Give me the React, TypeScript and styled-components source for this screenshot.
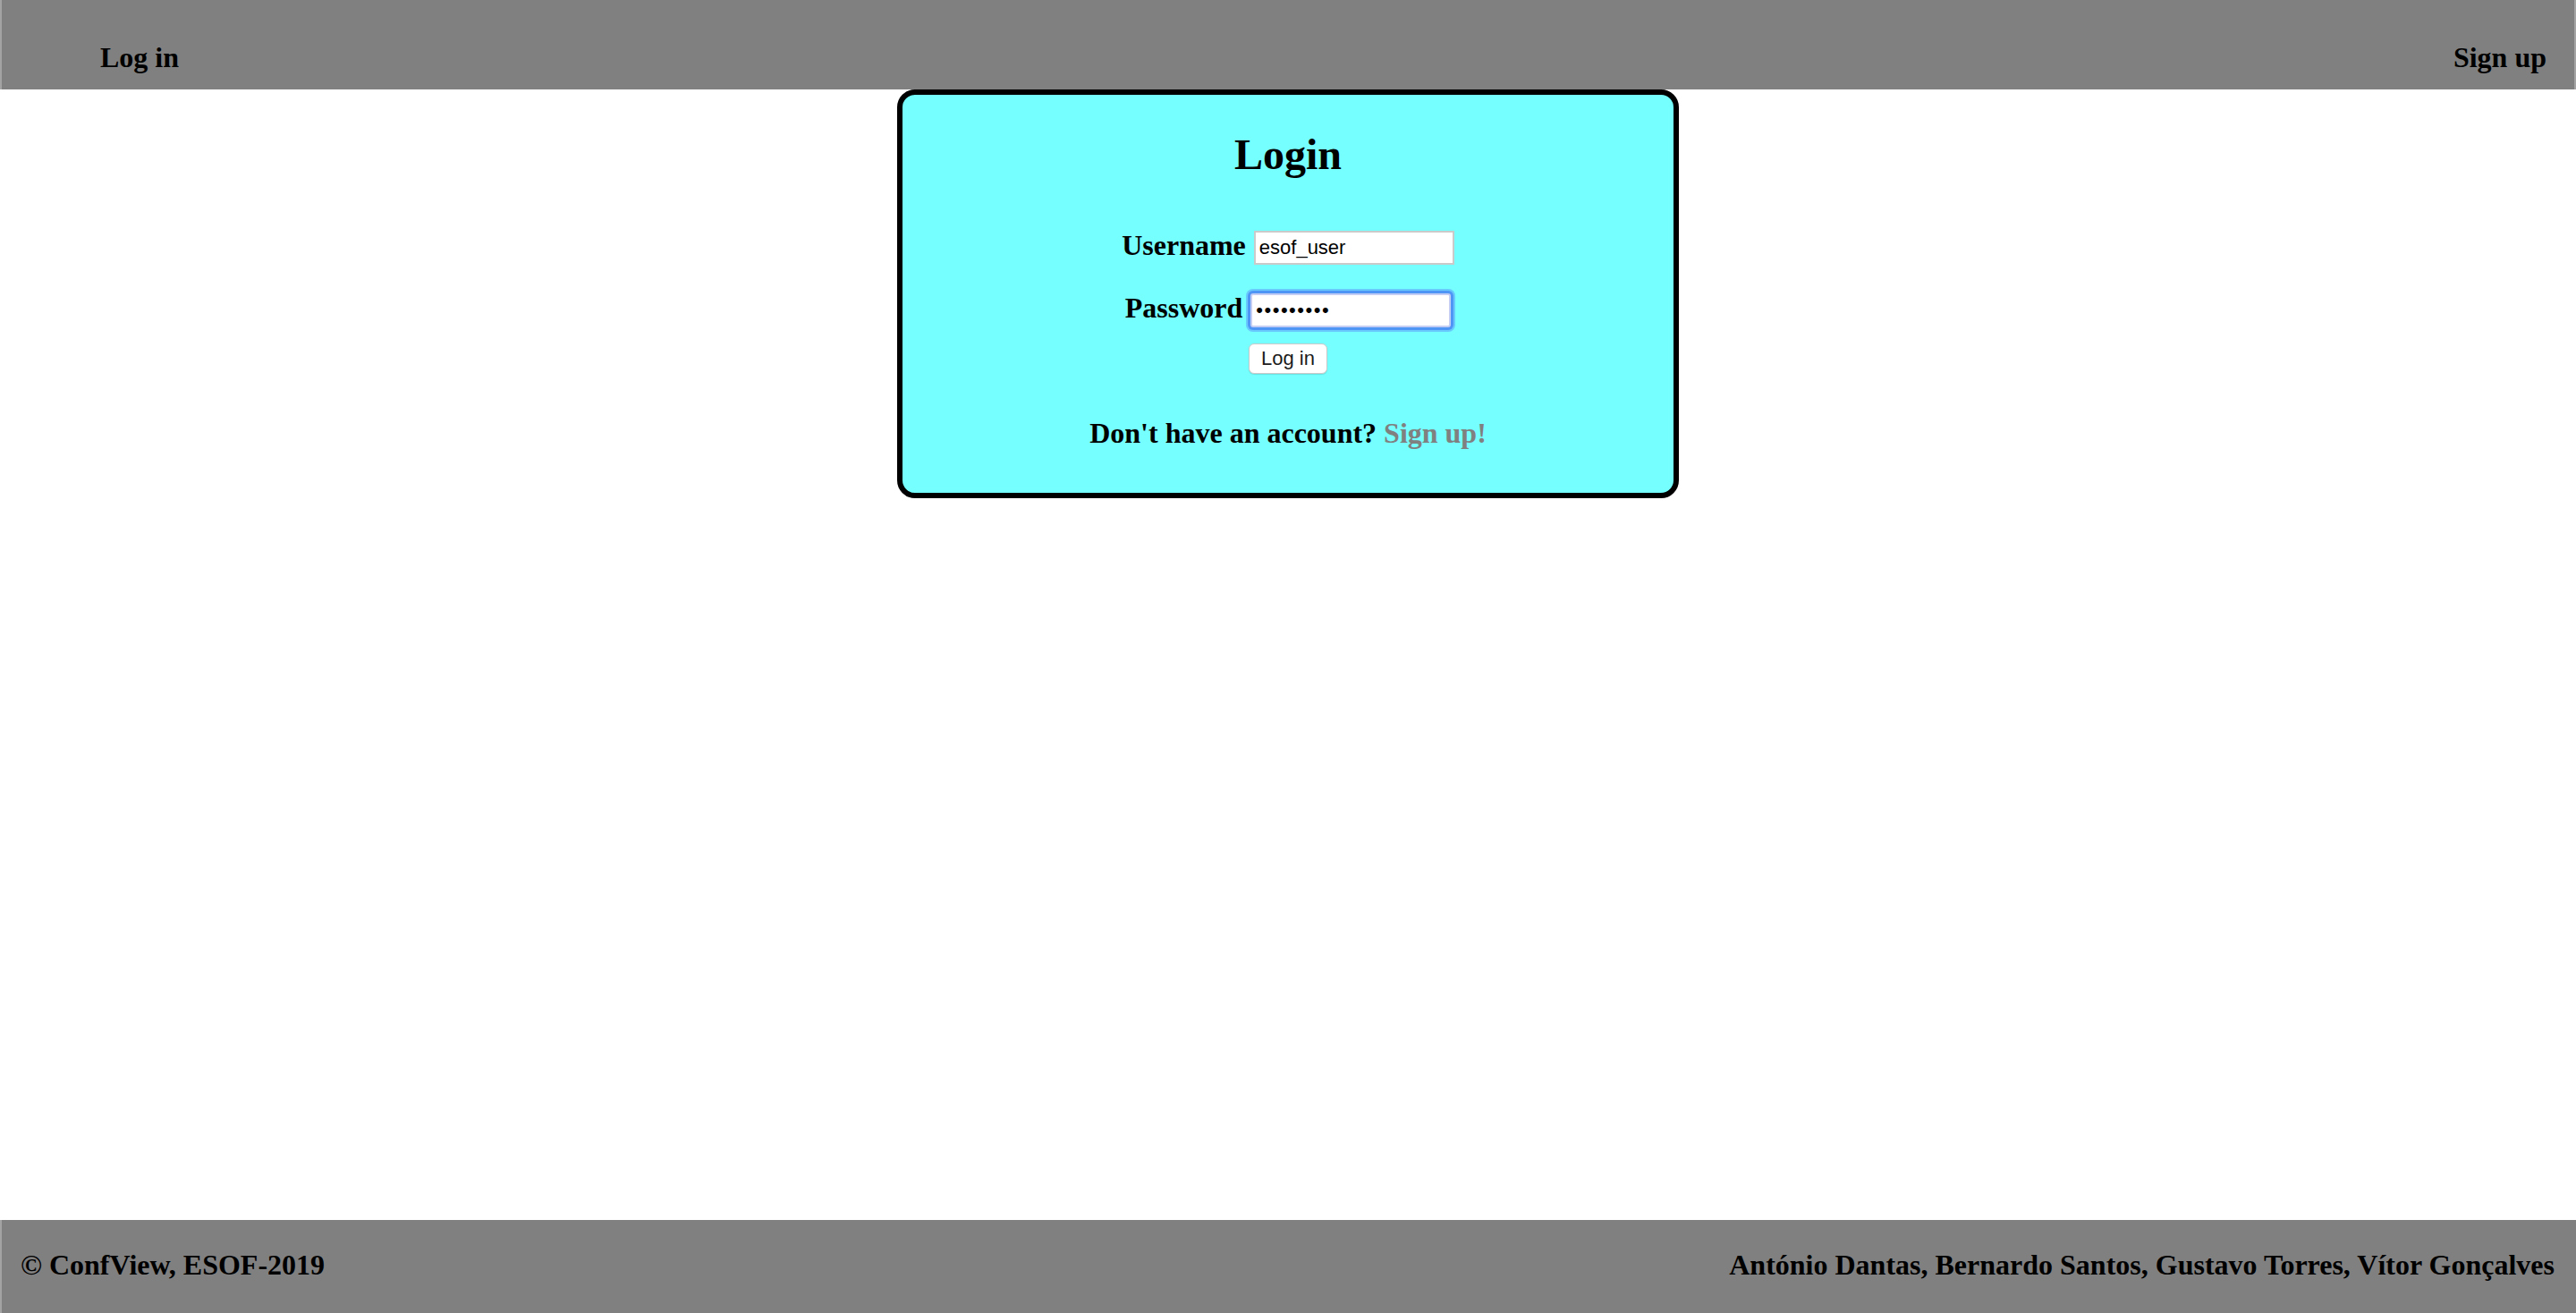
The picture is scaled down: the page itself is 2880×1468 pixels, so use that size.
import React from "react";
import styled, { createGlobalStyle } from "styled-components";

const GlobalStyle = createGlobalStyle`
  html, body {
    margin: 0;
    padding: 0;
    background: #ffffff;
    font-family: "Liberation Serif", "Times New Roman", serif;
  }
  * { box-sizing: border-box; }
`;

const Page = styled.div`
  display: flex;
  flex-direction: column;
  min-height: 1468px;
`;

const Header = styled.header`
  height: 100px;
  background: #808080;
  border-left: 2px solid #a3a3a3;
  border-right: 2px solid #a3a3a3;
  display: flex;
  justify-content: space-between;
  align-items: flex-end;
  padding: 0 31px 17px 110px;
`;

const NavLink = styled.a`
  font-family: "Liberation Serif", "Times New Roman", serif;
  font-weight: bold;
  font-size: 32px;
  line-height: normal;
  color: #000;
  text-decoration: none;
`;

const Main = styled.main`
  flex: 1;
  display: flex;
  flex-direction: column;
  align-items: center;
`;

const Card = styled.section`
  width: 874px;
  height: 457px;
  background: #75ffff;
  border: 6px solid #000;
  border-radius: 20px;
  display: flex;
  flex-direction: column;
  align-items: center;
`;

const Title = styled.h2`
  margin: 39px 0 0;
  font-size: 48px;
  font-weight: bold;
  line-height: normal;
  color: #000;
`;

const Row = styled.div<{ $top: number }>`
  margin-top: ${(p) => p.$top}px;
  display: flex;
  align-items: center;
  justify-content: center;
  gap: 9px;
`;

const Label = styled.label`
  font-size: 32px;
  font-weight: bold;
  line-height: normal;
  color: #000;
  margin: -3px 0 3px;
`;

const Input = styled.input<{ $focused?: boolean }>`
  width: 224px;
  height: 38px;
  padding: 0 4px;
  font-family: "Liberation Sans", Arial, sans-serif;
  font-size: 22px;
  color: #000;
  background: #fff;
  border: 2px solid ${(p) => (p.$focused ? "#c4cdf4" : "#cacaca")};
  border-radius: ${(p) => (p.$focused ? "3px" : "0")};
  box-shadow: ${(p) =>
    p.$focused
      ? "0 0 0 3px #4f95f5, 0 0 0 5px rgba(95, 165, 252, 0.6)"
      : "none"};
  outline: none;
  letter-spacing: ${(p) => (p.$focused ? "1.5px" : "0")};
`;

const Button = styled.button`
  margin-top: 18px;
  width: 88px;
  height: 34px;
  padding: 0;
  background: #fff;
  border: 1px solid #c9c9c9;
  border-radius: 6px;
  box-shadow: 0 1px 1px rgba(0, 0, 0, 0.12);
  font-family: "Liberation Sans", Arial, sans-serif;
  font-size: 22px;
  color: #1c1c1c;
`;

const Prompt = styled.p`
  margin: 48px 0 0;
  font-size: 32px;
  font-weight: bold;
  line-height: normal;
  color: #000;
`;

const PromptLink = styled.a`
  color: #808080;
  text-decoration: none;
`;

const Footer = styled.footer`
  height: 104px;
  background: #808080;
  border-left: 2px solid #a3a3a3;
  display: flex;
  justify-content: space-between;
  align-items: center;
  padding: 0 24px 3px 21px;
`;

const FooterText = styled.span`
  font-size: 32px;
  font-weight: bold;
  line-height: normal;
  color: #000;
`;

export default function App() {
  return (
    <>
      <GlobalStyle />
      <Page>
        <Header>
          <NavLink href="#">Log in</NavLink>
          <NavLink href="#">Sign up</NavLink>
        </Header>
        <Main>
          <Card>
            <Title>Login</Title>
            <Row $top={58}>
              <Label>Username</Label>
              <Input type="text" defaultValue="esof_user" />
            </Row>
            <Row $top={32}>
              <Label>Password</Label>
              <Input type="password" defaultValue="123456789" $focused />
            </Row>
            <Button type="button">Log in</Button>
            <Prompt>
              Don't have an account? <PromptLink href="#">Sign up!</PromptLink>
            </Prompt>
          </Card>
        </Main>
        <Footer>
          <FooterText>© ConfView, ESOF-2019</FooterText>
          <FooterText>António Dantas, Bernardo Santos, Gustavo Torres, Vítor Gonçalves</FooterText>
        </Footer>
      </Page>
    </>
  );
}
